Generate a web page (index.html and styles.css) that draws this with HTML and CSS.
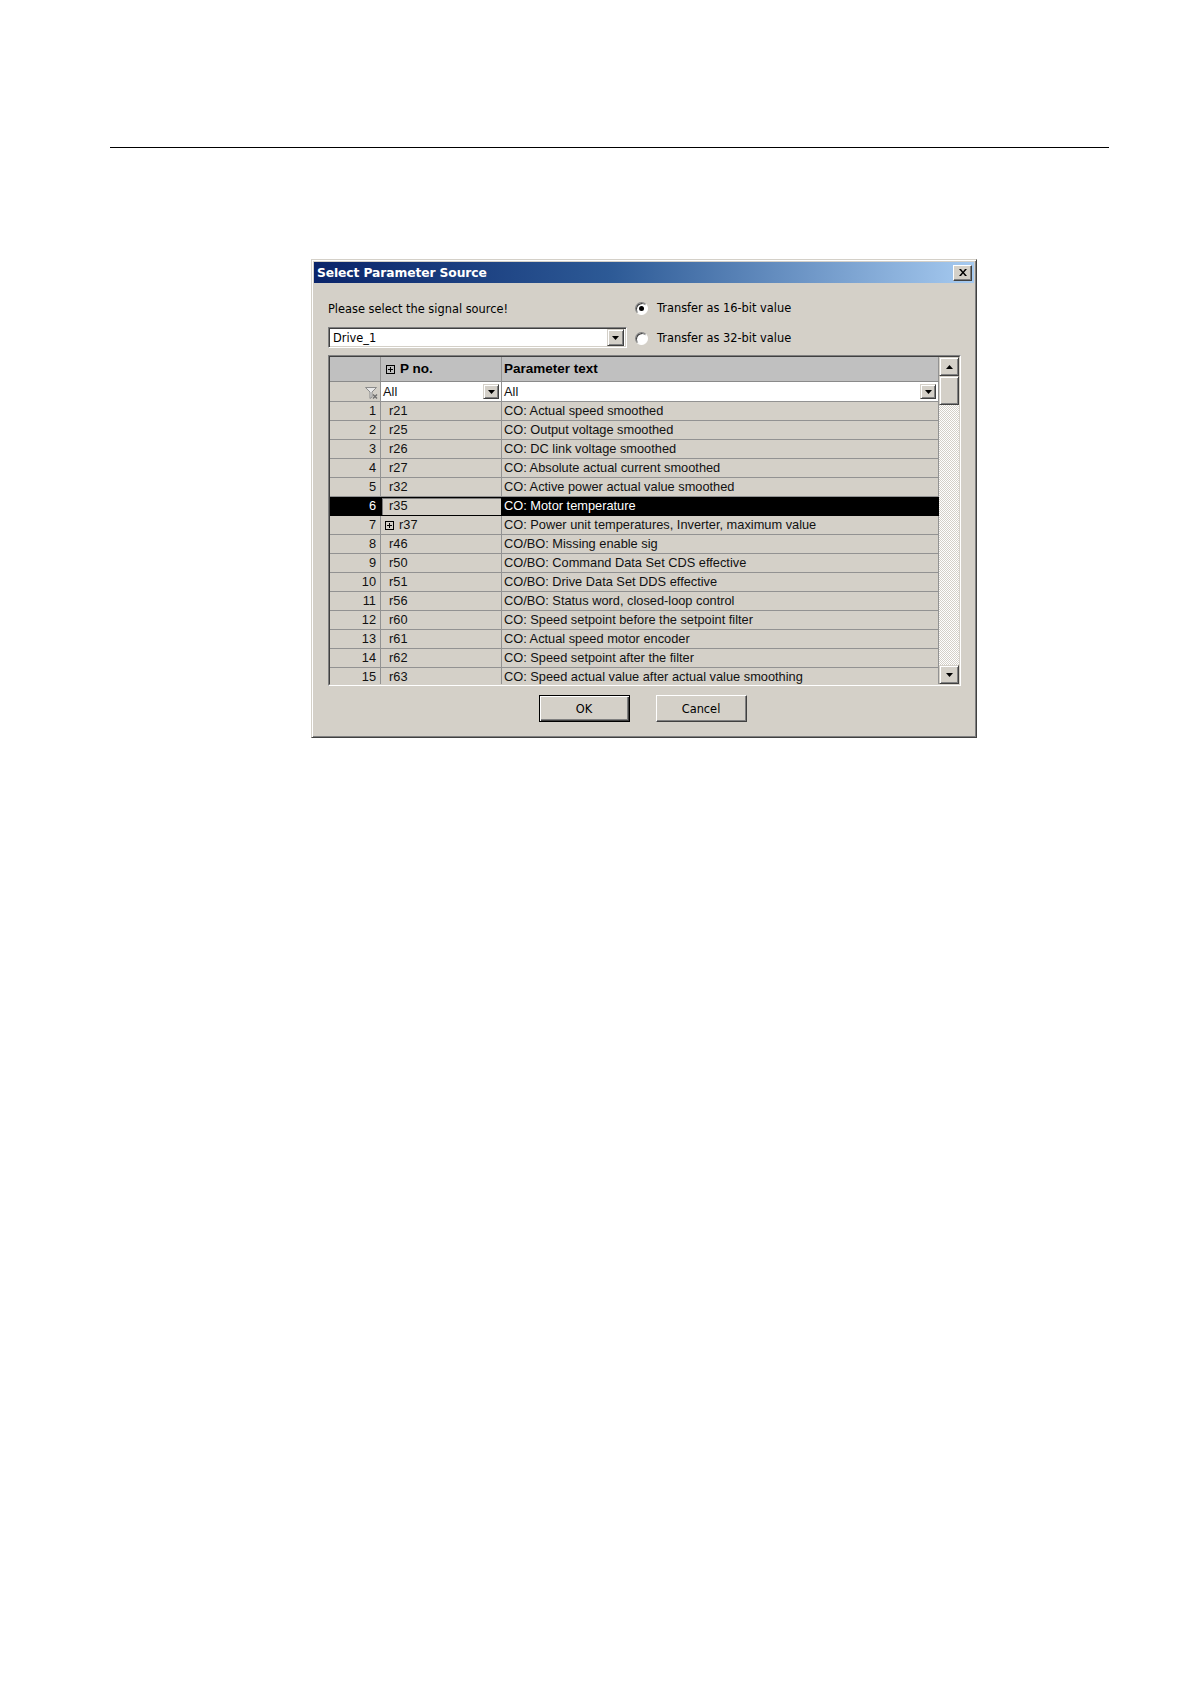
FILE: index.html
```html
<!DOCTYPE html>
<html>
<head>
<meta charset="utf-8">
<title>Select Parameter Source</title>
<link rel="stylesheet" href="styles.css">
</head>
<body>
<div class="rule"></div>
<div class="dialog">
  <div class="titlebar">
    <span class="title">Select Parameter Source</span>
    <span class="close-btn"><svg width="8" height="7" viewBox="0 0 8 7"><path d="M0 0h2l2 2.4 2-2.4h2l-3 3.5 3 3.5h-2l-2-2.4-2 2.4h-2l3-3.5z"/></svg></span>
  </div>
  <div class="body">
    <div class="top">
      <div class="label">Please select the signal source!</div>
      <div class="radio-row"><span class="radio checked"></span><span>Transfer as 16-bit value</span></div>
      <div class="combo">
        <span class="combo-text">Drive_1</span>
        <span class="drop-btn combo-btn"><svg width="7" height="4" viewBox="0 0 7 4"><path d="M0 0h7l-3.5 4z"/></svg></span>
      </div>
      <div class="radio-row"><span class="radio"></span><span>Transfer as 32-bit value</span></div>
    </div>

    <div class="grid-frame">
      <div class="grid-inner">
        <div class="table">
          <div class="row hdr">
            <div class="c c0"></div>
            <div class="c c1"><span class="plus"><svg width="9" height="9" viewBox="0 0 9 9"><rect x="0.5" y="0.5" width="8" height="8" fill="none" stroke="#000"/><path d="M2 4.5h5M4.5 2v5" stroke="#000"/></svg></span>P no.</div>
            <div class="c c2">Parameter text</div>
          </div>
          <div class="row filter">
            <div class="c c0"><svg class="funnel" width="15" height="14" viewBox="0 0 15 14"><path d="M1.5 1.5h11l-4.5 4.5v5l-2 1.5v-6.5z" fill="#e8e8e8" stroke="#8a8a8a"/><path d="M9 8.5l4 4M13 8.5l-4 4" stroke="#6f6f6f" stroke-width="1.4"/></svg></div>
            <div class="c c1 white"><span>All</span><span class="drop-btn"><svg width="7" height="4" viewBox="0 0 7 4"><path d="M0 0h7l-3.5 4z"/></svg></span></div>
            <div class="c c2 white"><span>All</span><span class="drop-btn"><svg width="7" height="4" viewBox="0 0 7 4"><path d="M0 0h7l-3.5 4z"/></svg></span></div>
          </div>
          <div class="row"><div class="c c0">1</div><div class="c c1">r21</div><div class="c c2">CO: Actual speed smoothed</div></div>
          <div class="row"><div class="c c0">2</div><div class="c c1">r25</div><div class="c c2">CO: Output voltage smoothed</div></div>
          <div class="row"><div class="c c0">3</div><div class="c c1">r26</div><div class="c c2">CO: DC link voltage smoothed</div></div>
          <div class="row"><div class="c c0">4</div><div class="c c1">r27</div><div class="c c2">CO: Absolute actual current smoothed</div></div>
          <div class="row"><div class="c c0">5</div><div class="c c1">r32</div><div class="c c2">CO: Active power actual value smoothed</div></div>
          <div class="row sel"><div class="c c0">6</div><div class="c c1">r35</div><div class="c c2">CO: Motor temperature</div></div>
          <div class="row"><div class="c c0">7</div><div class="c c1 exp"><span class="plus"><svg width="9" height="9" viewBox="0 0 9 9"><rect x="0.5" y="0.5" width="8" height="8" fill="none" stroke="#000"/><path d="M2 4.5h5M4.5 2v5" stroke="#000"/></svg></span>r37</div><div class="c c2">CO: Power unit temperatures, Inverter, maximum value</div></div>
          <div class="row"><div class="c c0">8</div><div class="c c1">r46</div><div class="c c2">CO/BO: Missing enable sig</div></div>
          <div class="row"><div class="c c0">9</div><div class="c c1">r50</div><div class="c c2">CO/BO: Command Data Set CDS effective</div></div>
          <div class="row"><div class="c c0">10</div><div class="c c1">r51</div><div class="c c2">CO/BO: Drive Data Set DDS effective</div></div>
          <div class="row"><div class="c c0">11</div><div class="c c1">r56</div><div class="c c2">CO/BO: Status word, closed-loop control</div></div>
          <div class="row"><div class="c c0">12</div><div class="c c1">r60</div><div class="c c2">CO: Speed setpoint before the setpoint filter</div></div>
          <div class="row"><div class="c c0">13</div><div class="c c1">r61</div><div class="c c2">CO: Actual speed motor encoder</div></div>
          <div class="row"><div class="c c0">14</div><div class="c c1">r62</div><div class="c c2">CO: Speed setpoint after the filter</div></div>
          <div class="row"><div class="c c0">15</div><div class="c c1">r63</div><div class="c c2">CO: Speed actual value after actual value smoothing</div></div>
        </div>
        <div class="scrollbar">
          <div class="sb-btn"><svg width="7" height="4" viewBox="0 0 7 4"><path d="M0 4h7l-3.5-4z"/></svg></div>
          <div class="sb-thumb"></div>
          <div class="sb-track"></div>
          <div class="sb-btn"><svg width="7" height="4" viewBox="0 0 7 4"><path d="M0 0h7l-3.5 4z"/></svg></div>
        </div>
      </div>
    </div>

    <div class="buttons">
      <div class="btn default">OK</div>
      <div class="btn">Cancel</div>
    </div>
  </div>
</div>
</body>
</html>
```

FILE: styles.css
```css
html, body {
  margin: 0;
  padding: 0;
  background: #fff;
}
body {
  width: 1190px;
  height: 1684px;
  overflow: hidden;
  font-family: "DejaVu Sans", sans-serif;
}
.rule {
  margin: 147px 0 0 110px;
  width: 999px;
  height: 1px;
  background: #000;
}
.dialog {
  margin: 111px 0 0 311px;
  width: 666px;
  box-sizing: border-box;
  background: #d4d0c8;
  border: 1px solid;
  border-color: #d4d0c8 #404040 #404040 #d4d0c8;
  box-shadow: inset 1px 1px #fff, inset -1px -1px #808080;
  padding: 2px;
}
.titlebar {
  height: 21px;
  display: flex;
  align-items: center;
  justify-content: space-between;
  background: linear-gradient(to right, #0a246a 0%, #2d5a96 45%, #a6caf0 100%);
  padding: 0 2px 0 3px;
}
.title {
  color: #fff;
  font: bold 12.3px "DejaVu Sans", sans-serif;
  letter-spacing: -0.1px;
}
.close-btn {
  width: 19px;
  height: 16px;
  box-sizing: border-box;
  display: flex;
  align-items: center;
  justify-content: center;
  background: #d4d0c8;
  border: 1px solid;
  border-color: #fff #404040 #404040 #fff;
  box-shadow: inset -1px -1px #808080;
}
.body {
  padding: 13px 13px 13px 14px;
  font-size: 11.4px;
  color: #000;
}
.top {
  display: grid;
  grid-template-columns: 299px 1fr;
  grid-template-rows: 24px 22px;
  column-gap: 8px;
  row-gap: 7px;
  align-items: center;
}
.label {
  padding-top: 1px;
}
.radio-row {
  display: flex;
  align-items: center;
  gap: 9px;
}
.radio {
  width: 13px;
  height: 13px;
  box-sizing: border-box;
  border-radius: 50%;
  border: 1px solid;
  border-color: #808080 #fff #fff #808080;
  box-shadow: inset 1px 1px #404040;
  background: #fff;
  position: relative;
}
.radio.checked::after {
  content: "";
  position: absolute;
  left: 3px;
  top: 3px;
  width: 5px;
  height: 5px;
  border-radius: 50%;
  background: #000;
}
.combo {
  align-self: start;
  height: 21px;
  box-sizing: border-box;
  display: flex;
  align-items: center;
  justify-content: space-between;
  background: #fff;
  border: 1px solid;
  border-color: #808080 #fff #fff #808080;
  box-shadow: inset 1px 1px #404040, inset -1px -1px #d4d0c8;
  padding: 2px 2px 2px 4px;
}
.combo-text {
  padding-top: 1px;
}
.drop-btn {
  width: 16px;
  height: 15px;
  box-sizing: border-box;
  display: flex;
  align-items: center;
  justify-content: center;
  background: #d4d0c8;
  border: 1px solid;
  border-color: #d4d0c8 #404040 #404040 #d4d0c8;
  box-shadow: inset 1px 1px #fff, inset -1px -1px #808080;
}
.combo-btn {
  width: 17px;
  height: 17px;
}
.grid-frame {
  margin-top: 6px;
  height: 331px;
  box-sizing: border-box;
  border: 1px solid;
  border-color: #808080 #fff #fff #808080;
}
.grid-inner {
  height: 100%;
  box-sizing: border-box;
  border: 1px solid;
  border-color: #404040 #d4d0c8 #d4d0c8 #404040;
  display: flex;
  overflow: hidden;
}
.table {
  width: 609px;
  flex: none;
  overflow: hidden;
  background: #d4d0c8;
  font-family: "Liberation Sans", Arial, sans-serif;
  font-size: 12.8px;
  color: #111;
}
.row {
  display: grid;
  grid-template-columns: 51px 121px 437px;
  height: 19px;
  box-sizing: border-box;
  border-bottom: 1px solid #929292;
}
.c {
  box-sizing: border-box;
  border-right: 1px solid #929292;
  line-height: 18px;
  white-space: nowrap;
  overflow: hidden;
  display: flex;
  align-items: center;
}
.c0 {
  justify-content: flex-end;
  padding-right: 4px;
}
.c1 {
  padding-left: 8px;
}
.c2 {
  padding-left: 2px;
}
.c1.exp {
  padding-left: 4px;
}
.plus {
  display: inline-flex;
  margin-right: 5px;
}
.hdr {
  height: 25px;
  background: #c0c0c0;
  font-weight: bold;
  font-size: 13.5px;
  border-bottom-color: #8a8a8a;
  color: #000;
}
.hdr .c1 {
  padding-left: 5px;
}
.hdr .c {
  line-height: 24px;
}
.filter {
  height: 20px;
}
.filter .c {
  line-height: 19px;
}
.filter .c0 {
  padding-right: 1px;
  align-items: flex-end;
}
.funnel {
  margin-bottom: 1px;
}
.white {
  background: #fff;
  justify-content: space-between;
  padding-left: 2px;
  padding-right: 2px;
}
.sel {
  background: #000;
  color: #fff;
  border-bottom-color: #000;
}
.sel .c {
  border-right-color: #000;
}
.sel .c1 {
  background: #d4d0c8;
  color: #111;
  box-shadow: inset 1px 1px #000, inset 2px 2px #7a7a7a;
}
.scrollbar {
  flex: 1;
  display: flex;
  flex-direction: column;
}
.sb-btn, .sb-thumb {
  box-sizing: border-box;
  background: #d4d0c8;
  border: 1px solid;
  border-color: #d4d0c8 #404040 #404040 #d4d0c8;
  box-shadow: inset 1px 1px #fff, inset -1px -1px #808080;
}
.sb-btn {
  height: 19px;
  display: flex;
  align-items: center;
  justify-content: center;
}
.sb-thumb {
  height: 29px;
}
.sb-track {
  flex: 1;
  background: repeating-conic-gradient(#fff 0 25%, #d4d0c8 0 50%) 0 0 / 2px 2px;
}
.buttons {
  margin-top: 9px;
  padding-right: 4px;
  display: flex;
  justify-content: center;
  gap: 26px;
}
.btn {
  width: 91px;
  height: 27px;
  box-sizing: border-box;
  display: flex;
  align-items: center;
  justify-content: center;
  background: #d4d0c8;
  border: 1px solid;
  border-color: #fff #404040 #404040 #fff;
  box-shadow: inset -1px -1px #808080;
  font-size: 11.4px;
}
.btn.default {
  border: 1px solid #000;
  box-shadow: inset 1px 1px #fff, inset -1px -1px #404040, inset -2px -2px #808080;
}
```
